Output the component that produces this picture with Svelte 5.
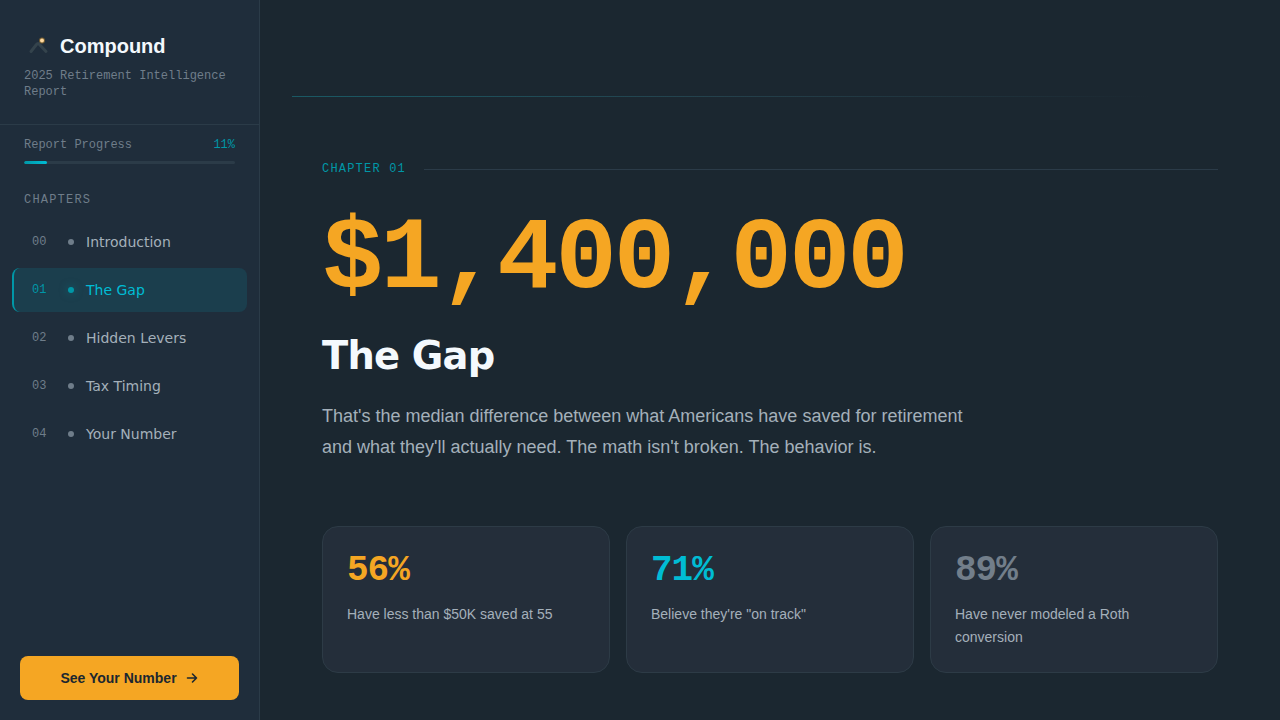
<script lang="ts">
  type Chapter = { id: string; label: string };

  const chapters: Chapter[] = [
    { id: '00', label: 'Introduction' },
    { id: '01', label: 'The Gap' },
    { id: '02', label: 'Hidden Levers' },
    { id: '03', label: 'Tax Timing' },
    { id: '04', label: 'Your Number' }
  ];

  const stats = [
    { value: '56%', text: 'Have less than $50K saved at 55', tone: 'amber' },
    { value: '71%', text: 'Believe they\'re "on track"', tone: 'cyan' },
    { value: '89%', text: 'Have never modeled a Roth conversion', tone: 'muted' }
  ];

  let active = $state('01');
  let progress = $state(11);

  function openChapter(event: Event, id: string) {
    event.preventDefault();
    active = id;
  }
</script>

<div class="layout">
  <aside class="sidebar">
    <header class="brand">
      <div class="brand-row">
        <svg class="logo" viewBox="0 0 28 28" aria-hidden="true">
          <path d="M7 19.5 L12.5 12.5 Q14 10.5 15.5 12.5 L22 19.5" fill="none" stroke="#34434c" stroke-width="3" stroke-linecap="round" />
          <circle cx="18" cy="8.5" r="3" fill="#f5a623" opacity="0.4" />
          <circle cx="18" cy="8.5" r="2" fill="#ffd9a0" />
        </svg>
        <span class="brand-name">Compound</span>
      </div>
      <p class="brand-sub">2025 Retirement Intelligence Report</p>
    </header>

    <div class="progress">
      <div class="progress-head">
        <span>Report Progress</span>
        <span class="percent">{progress}%</span>
      </div>
      <div class="track">
        <div class="fill" style="width: {progress}%"></div>
      </div>
    </div>

    <nav class="chapters" aria-label="Chapters">
      <h2>CHAPTERS</h2>
      <ul>
        {#each chapters as chapter}
          <li>
            <a
              href="#chapter-{chapter.id}"
              class:active={active === chapter.id}
              onclick={(e) => openChapter(e, chapter.id)}
            >
              <span class="num">{chapter.id}</span>
              <span class="dot"></span>
              <span class="label">{chapter.label}</span>
            </a>
          </li>
        {/each}
      </ul>
    </nav>

    <div class="cta-wrap">
      <button type="button" class="cta">
        See Your Number
        <svg viewBox="0 0 14 14" aria-hidden="true">
          <path d="M2.5 7h9M7.5 3l4 4-4 4" fill="none" stroke="currentColor" stroke-width="1.6" stroke-linecap="round" stroke-linejoin="round" />
        </svg>
      </button>
    </div>
  </aside>

  <main>
    <div class="divider"></div>
    <section class="chapter">
      <div class="eyebrow">
        <span>CHAPTER 01</span>
        <span class="rule"></span>
      </div>
      <p class="figure">$1,400,000</p>
      <h1>The Gap</h1>
      <p class="lede">
        That's the median difference between what Americans have saved for retirement and what
        they'll actually need. The math isn't broken. The behavior is.
      </p>
      <div class="stats">
        {#each stats as stat}
          <article class="card">
            <strong class={stat.tone}>{stat.value}</strong>
            <p>{stat.text}</p>
          </article>
        {/each}
      </div>
    </section>
  </main>
</div>

<style>
  :global(body) {
    margin: 0;
    background: #1b2730;
  }

  .layout {
    --mono: 'Liberation Mono', monospace;
    --amber: #f5a623;
    --cyan: #00bcd4;
    --teal: #0097a7;
    --muted: #6f7d8a;
    --soft: #a4b0ba;
    --line: #2b3b48;
    display: grid;
    grid-template-columns: 260px 1fr;
    min-height: 100vh;
    font-family: 'Liberation Sans', Arial, sans-serif;
    color: var(--soft);
    background: #1b2730;
  }

  h1,
  h2,
  p,
  ul {
    margin: 0;
    padding: 0;
  }

  .sidebar {
    display: flex;
    flex-direction: column;
    box-sizing: border-box;
    background: #1f2d3b;
    border-right: 1px solid var(--line);
  }

  .brand {
    padding: 32px 24px 24px;
    border-bottom: 1px solid var(--line);
  }
  .brand-row {
    display: flex;
    align-items: center;
    gap: 8px;
    height: 28px;
  }
  .logo {
    width: 28px;
    height: 28px;
  }
  .brand-name {
    font-size: 20px;
    font-weight: 700;
    color: #f4f9fd;
  }
  .brand-sub {
    margin-top: 8px;
    font: 12px/16px var(--mono);
    color: var(--muted);
  }

  .progress {
    padding: 12px 24px;
  }
  .progress-head {
    display: flex;
    justify-content: space-between;
    font: 12px/16px var(--mono);
    color: var(--muted);
  }
  .percent {
    color: var(--teal);
  }
  .track {
    height: 3px;
    margin-top: 8px;
    border-radius: 2px;
    background: #2b3b48;
    overflow: hidden;
  }
  .fill {
    height: 100%;
    border-radius: 2px;
    background: linear-gradient(90deg, var(--teal), var(--cyan));
  }

  .chapters {
    flex: 1;
    padding: 16px 12px;
  }
  h2 {
    padding: 0 12px;
    font: 12px/16px var(--mono);
    letter-spacing: 0.1em;
    color: var(--muted);
  }
  ul {
    display: grid;
    gap: 4px;
    margin-top: 12px;
    list-style: none;
  }
  .chapters a {
    display: flex;
    align-items: center;
    height: 44px;
    padding-left: 18px;
    border-left: 2px solid transparent;
    border-radius: 8px;
    color: var(--soft);
    text-decoration: none;
  }
  .num {
    width: 24px;
    font: 12px/16px var(--mono);
    color: var(--muted);
  }
  .dot {
    width: 6px;
    height: 6px;
    margin: 0 12px;
    border-radius: 50%;
    background: var(--muted);
  }
  .label {
    font: 14px/20px 'DejaVu Sans', sans-serif;
  }
  .chapters a.active {
    border-left-color: var(--teal);
    background: #1b3e4d;
    color: var(--cyan);
  }
  .active .num {
    color: var(--teal);
  }
  .active .dot {
    background: var(--teal);
    box-shadow: 0 0 8px rgba(0, 151, 167, 0.5);
  }

  .cta-wrap {
    padding: 20px;
  }
  .cta {
    display: flex;
    align-items: center;
    justify-content: center;
    gap: 8px;
    width: 100%;
    height: 44px;
    border: 0;
    border-radius: 8px;
    background: var(--amber);
    color: #1b2730;
    font: 700 14px/20px 'Liberation Sans', Arial, sans-serif;
    cursor: pointer;
  }
  .cta svg {
    width: 14px;
    height: 14px;
  }

  main {
    padding-top: 96px;
    min-width: 0;
  }
  .divider {
    height: 1px;
    margin: 0 32px;
    background: linear-gradient(90deg, #1a5964, #24404b 45%, transparent 90%);
  }

  .chapter {
    box-sizing: border-box;
    max-width: 960px;
    margin: 0 auto;
    padding: 64px 32px 40px;
  }
  .eyebrow {
    display: flex;
    align-items: center;
    gap: 18px;
    font: 12px/16px var(--mono);
    letter-spacing: 0.1em;
    color: var(--teal);
  }
  .rule {
    flex: 1;
    height: 1px;
    background: var(--line);
  }
  .figure {
    margin-top: 32px;
    font: 700 8vw/102px var(--mono);
    letter-spacing: -0.03em;
    color: var(--amber);
  }
  h1 {
    margin-top: 24px;
    font: 700 3vw/42px 'DejaVu Sans', sans-serif;
    letter-spacing: -0.02em;
    color: #f4f9fd;
  }
  .lede {
    max-width: 660px;
    margin-top: 24px;
    font-size: 18px;
    line-height: 1.7;
  }

  .stats {
    display: grid;
    grid-template-columns: repeat(3, 1fr);
    gap: 16px;
    margin-top: 64px;
  }
  .card {
    padding: 24px;
    border: 1px solid #2d3b46;
    border-radius: 16px;
    background: #242e3a;
  }
  .card strong {
    display: block;
    font: 700 36px/40px var(--mono);
    letter-spacing: -1px;
  }
  .card p {
    margin-top: 12px;
    font-size: 14px;
    line-height: 1.6;
  }
  .amber {
    color: var(--amber);
  }
  .cyan {
    color: var(--cyan);
  }
  .muted {
    color: #727e8a;
  }
</style>
